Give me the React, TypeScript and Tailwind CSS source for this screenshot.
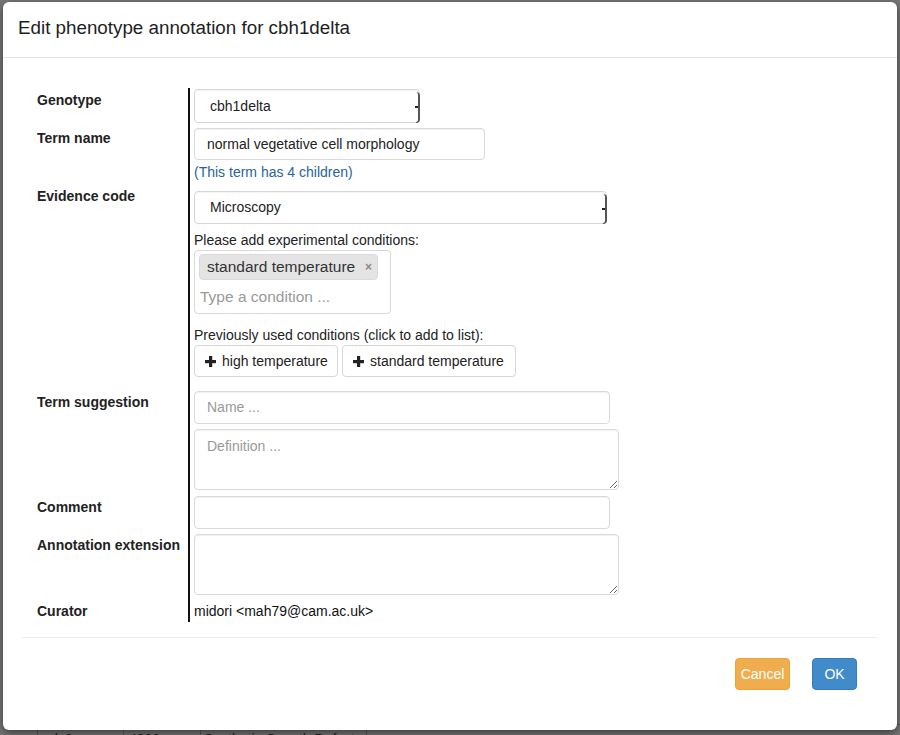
import React from "react";

const font = { fontFamily: '"Liberation Sans", Arial, Helvetica, sans-serif' };

// fake mac-ish select box
function SelectBox({ value, w, h }: { value: string; w: string; h: string }) {
  return (
    <div
      className={`relative flex items-center rounded-[4px] border border-[#d6d6d6] bg-white pl-[15px] text-[14px] text-[#222] shadow-[inset_0_1px_1px_rgba(0,0,0,0.05)] ${w} ${h}`}
    >
      {value}
      <div className="absolute right-[-1px] top-[2px] bottom-[-1px] w-[4px] rounded-r-[4px] border-r-2 border-b border-[#555]" />
      <div className="absolute right-[1px] top-1/2 h-[2px] w-[3px] bg-[#222]" />
    </div>
  );
}

function TextInput({ w, h, value, placeholder }: { w: string; h: string; value?: string; placeholder?: string }) {
  return (
    <div
      className={`flex items-center rounded-[4px] border border-[#d9d9d9] bg-white px-[12px] text-[14px] shadow-[inset_0_1px_1px_rgba(0,0,0,0.06)] ${w} ${h}`}
    >
      {value ? <span className="text-[#222]">{value}</span> : <span className="text-[#999]">{placeholder}</span>}
    </div>
  );
}

function TextArea({ w, h, placeholder }: { w: string; h: string; placeholder?: string }) {
  return (
    <textarea
      readOnly
      placeholder={placeholder}
      className={`block rounded-[4px] border border-[#d9d9d9] bg-white px-[12px] py-[6px] text-[14px] leading-[20px] text-[#222] placeholder:text-[#999] shadow-[inset_0_1px_1px_rgba(0,0,0,0.06)] outline-none ${w} ${h}`}
      style={font}
    />
  );
}

function Plus() {
  return (
    <svg width="11" height="11" viewBox="0 0 11 11" className="shrink-0">
      <rect x="4" y="0" width="3.2" height="11" fill="#222" />
      <rect x="0" y="4" width="11" height="3.2" fill="#222" />
    </svg>
  );
}

function Row({
  label,
  labelPt,
  pt,
  pb,
  children,
}: {
  label: string;
  labelPt: string;
  pt: string;
  pb: string;
  children: React.ReactNode;
}) {
  return (
    <div className="flex">
      <div className={`w-[166px] shrink-0 pl-[15px] text-[14px] font-bold leading-[20px] text-[#222] ${labelPt}`}>{label}</div>
      <div className={`flex-1 border-l-2 border-[#111] pl-[4px] ${pt} ${pb}`}>{children}</div>
    </div>
  );
}

export default function App() {
  return (
    <div className="relative h-[735px] w-[900px] overflow-hidden bg-[#767676]" style={font}>
      {/* page behind the backdrop */}
      <div className="pt-[724px] pl-[37px] text-[14px] text-[#1c1c1c]">
        <div className="flex h-[22px] border-t border-[#5a5a5a]">
          <div className="w-[86px] border-l border-[#5a5a5a] pl-[5px] pt-[4px]">cdc6</div>
          <div className="w-[77px] border-l border-[#5a5a5a] pl-[5px] pt-[4px]">4806</div>
          <div className="w-[166px] border-l border-[#5a5a5a] pl-[3px] pt-[4px]">Synthetic Growth Defect</div>
          <div className="w-[100px] border-l border-[#5a5a5a]" />
        </div>
      </div>

      {/* modal */}
      <div className="absolute left-[3px] top-[2px] h-[728px] w-[894px] rounded-[6px] bg-white shadow-[0_3px_9px_rgba(0,0,0,0.5)]">
        <div className="flex h-[56px] items-center border-b border-[#e5e5e5] px-[15px] pb-[3px] text-[18.8px] text-[#1e1e1e]">
          Edit phenotype annotation for cbh1delta
        </div>

        <div className="pl-[19px] pr-[20px] pt-[30px]">
          <Row label="Genotype" labelPt="pt-[2px]" pt="pt-[1px]" pb="pb-[3px]">
            <SelectBox value="cbh1delta" w="w-[226px]" h="h-[34px]" />
          </Row>

          <Row label="Term name" labelPt="pt-[2px]" pt="pt-[2px]" pb="pb-[2px]">
            <TextInput w="w-[291px]" h="h-[32px]" value="normal vegetative cell morphology" />
            <div className="mt-[2px] text-[14px] leading-[20px] text-[#2a6496]">(This term has 4 children)</div>
          </Row>

          <Row label="Evidence code" labelPt="pt-[2px]" pt="pt-[7px]" pb="pb-[11px]">
            <SelectBox value="Microscopy" w="w-[413px]" h="h-[33px]" />
            <div className="mt-[6px] text-[14px] leading-[20px] text-[#222]">Please add experimental conditions:</div>
            <div className="h-[64px] w-[197px] rounded-[4px] border border-[#d9d9d9] px-[4px] pt-[3px]">
              <div className="flex h-[26px] w-[179px] items-center justify-between rounded-[4px] border border-[#dadada] bg-[#e4e4e4] pl-[7px] pr-[5px] text-[15.5px] text-[#333]">
                <span>standard temperature</span>
                <span className="text-[12px] font-bold text-[#8a8a8a]">×</span>
              </div>
              <div className="mt-[6px] pl-[1px] text-[15.5px] leading-[22px] text-[#999]">Type a condition ...</div>
            </div>
            <div className="mt-[11px] text-[14px] leading-[20px] text-[#222]">Previously used conditions (click to add to list):</div>
            <div className="flex gap-[4px]">
              <div className="flex h-[32px] w-[144px] items-center gap-[6px] rounded-[4px] border border-[#d6d6d6] bg-white pl-[10px] text-[14px] text-[#222]">
                <Plus />
                high temperature
              </div>
              <div className="flex h-[32px] w-[174px] items-center gap-[6px] rounded-[4px] border border-[#d6d6d6] bg-white pl-[10px] text-[14px] text-[#222]">
                <Plus />
                standard temperature
              </div>
            </div>
          </Row>

          <Row label="Term suggestion" labelPt="pt-[4px]" pt="pt-[3px]" pb="pb-[3px]">
            <TextInput w="w-[416px]" h="h-[33px]" placeholder="Name ..." />
            <div className="mt-[5px]">
              <TextArea w="w-[425px]" h="h-[61px]" placeholder="Definition ..." />
            </div>
          </Row>

          <Row label="Comment" labelPt="pt-[4px]" pt="pt-[3px]" pb="pb-[2px]">
            <TextInput w="w-[416px]" h="h-[33px]" />
          </Row>

          <Row label="Annotation extension" labelPt="pt-[4px]" pt="pt-[3px]" pb="pb-[4px]">
            <TextArea w="w-[425px]" h="h-[61px]" />
          </Row>

          <Row label="Curator" labelPt="pt-[2px]" pt="pt-[2px]" pb="pb-[1px]">
            <div className="text-[14px] leading-[20px] text-[#111]">midori &lt;mah79@cam.ac.uk&gt;</div>
          </Row>

          <div className="mt-[15px] border-t border-[#ececec]" />

          <div className="mt-[20px] flex justify-end gap-[22px] pr-[20px]">
            <div className="flex h-[32px] w-[55px] items-center justify-center rounded-[4px] border border-[#eea236] bg-[#f0ad4e] text-[14px] text-white">
              Cancel
            </div>
            <div className="flex h-[32px] w-[45px] items-center justify-center rounded-[4px] border border-[#357ebd] bg-[#428bca] text-[14px] text-white">
              OK
            </div>
          </div>
        </div>
      </div>
    </div>
  );
}
